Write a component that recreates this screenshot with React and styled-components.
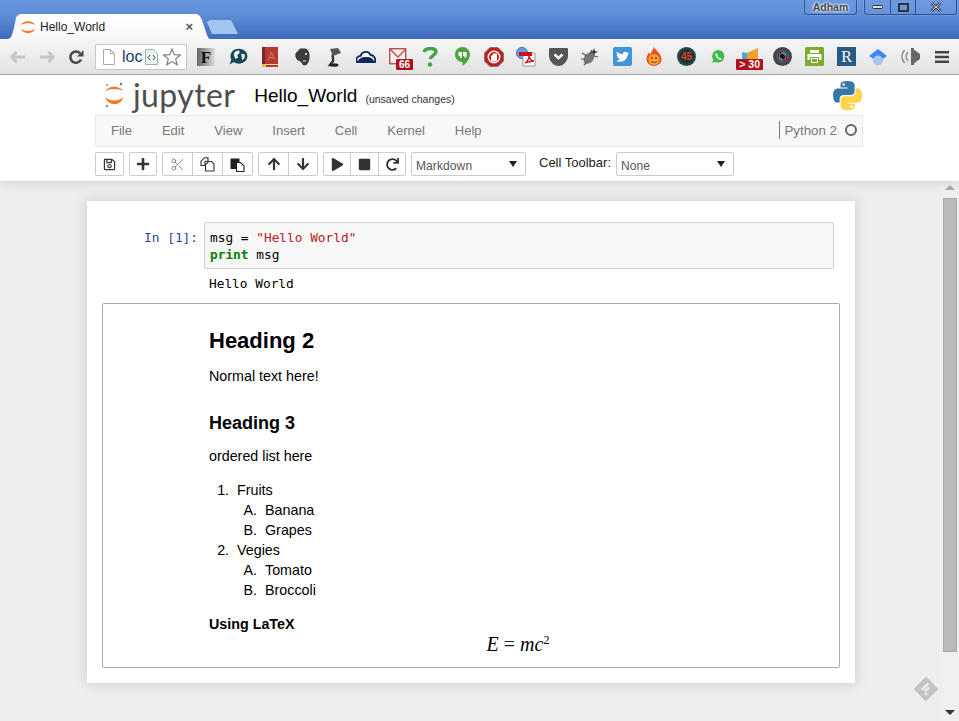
import React from 'react';
import styled, { createGlobalStyle } from 'styled-components';
import { FaRegSave, FaPlus, FaArrowUp, FaArrowDown, FaPlay, FaStop, FaRedo } from 'react-icons/fa';
import { Scissors } from 'lucide-react';

const Global = createGlobalStyle`
  html, body { margin: 0; padding: 0; height: 100%; overflow: hidden; background: #eee; }
  * { box-sizing: border-box; }
  body { font-family: "Liberation Sans", Arial, sans-serif; }
`;
const Page = styled.div`display: flex; flex-direction: column; width: 959px; height: 721px; overflow: hidden;`;

const TitleBar = styled.div`
  height: 39px; flex: none; display: flex; align-items: flex-end; padding-left: 7px;
  background: linear-gradient(#6796de 0%, #5f8ed9 35%, #3f6cbb 100%); position: relative;
`;
const Tab = styled.div`
  width: 204px; height: 25px; background: linear-gradient(#fff, #f7f7f7); display: flex; align-items: center;
  padding: 0 18px 0 14px; gap: 5px;
  clip-path: path('M0 25 C5 25 5 20 7 14 L9 4 C10 1 12 0 15 0 L188 0 C192 0 193 2 195 6 L199 18 C201 23 201 25 204 25 Z');
`;
const TabTitle = styled.span`flex: 1; font-size: 12px; color: #222;`;
const TabClose = styled.span`font-size: 13px; font-weight: bold; color: #555; line-height: 1;`;
const NewTab = styled.div`
  width: 31px; height: 14px; margin: 0 0 5px -4px; background: #a5c5f1;
  clip-path: polygon(3px 0, 24px 0, 31px 14px, 5px 14px, 0 2px);
`;
const WinControls = styled.div`position: absolute; top: 0; right: 2px; display: flex; gap: 7px;`;
const WinGroup = styled.div`
  display: flex; height: 15px; border: 1px solid #2f5290; border-top: none; border-radius: 0 0 4px 4px;
  box-shadow: 0 0 0 1px rgba(255,255,255,.1); background: rgba(255,255,255,.04);
`;
const WinUser = styled.span`
  width: 51px; text-align: center; font-size: 10.5px; font-weight: bold; line-height: 14px; color: #4a4a4a;
  text-shadow: 0 0 3px #fff, 0 0 3px #fff;
`;
const WinBtn = styled.span`
  width: ${p => p.$w}px; display: flex; align-items: center; justify-content: center;
  & + & { border-left: 1px solid #2f5290; }
`;

const ChromeBar = styled.div`
  height: 36px; flex: none; display: flex; align-items: center; padding-left: 3px;
  background: linear-gradient(#f6f6f6, #e2e2e2); border-bottom: 1px solid #a3a3a3;
`;
const NavSlot = styled.span`width: 29px; height: 20px; display: flex; align-items: center; justify-content: center; flex: none;`;
const Omnibox = styled.div`
  width: 92px; height: 26px; margin: 0 3px 0 5px; display: flex; align-items: center; padding: 0 3px 0 7px; flex: none;
  background: #fff; border: 1px solid #c7c7c7; border-radius: 2px; box-shadow: 0 0 1px #ddd;
`;
const OmniText = styled.span`font-size: 16px; color: #1c3a5c; margin-left: 7px; width: 23px; overflow: hidden; white-space: nowrap; flex: none;`;
const ExtRow = styled.div`display: flex; align-items: center;`;
const ExtSlot = styled.span`width: 32px; height: 24px; flex: none; display: flex; align-items: center; justify-content: center; position: relative;`;
const Badge = styled.span`
  position: absolute; bottom: -1px; right: ${p => p.$r}px; height: 11px; padding: 0 3px; background: #b0121d; color: #fff;
  font: bold ${p => p.$s}px/11px "Liberation Sans", sans-serif; border-radius: 1px; white-space: nowrap;
`;

const NbHeader = styled.div`
  height: 40px; flex: none; background: #fff; display: flex; align-items: center; padding: 0 97px 0 104px;
`;
const Wordmark = styled.span`font: 400 32px/1 Lato, sans-serif; color: #4e4e4e; margin-left: 8px; letter-spacing: .4px;`;
const NbTitle = styled.span`font-size: 19px; color: #000; margin-left: 19px; margin-top: 2px;`;
const Saved = styled.span`font-size: 10.5px; color: #333; margin-left: 8px; margin-top: 7px; flex: 1;`;

const MenuWrap = styled.div`height: 32px; flex: none; background: #fff; padding: 0 96px 0 95px;`;
const MenuBar = styled.div`
  height: 32px; padding-bottom: 2px; background: #f8f8f8; border: 1px solid #e7e7e7; border-radius: 0 0 2px 2px; display: flex; align-items: center;
`;
const MenuItem = styled.span`font-size: 13px; color: #777; padding: 0 15px;`;
const Kernel = styled.div`
  margin-left: auto; display: flex; align-items: center; height: 18px; border-left: 1px solid #777; padding: 0 5px 0 5px;
  font-size: 13.3px; color: #777; gap: 8px;
`;
const KernelDot = styled.span`width: 12px; height: 12px; border-radius: 50%; border: 2px solid #666;`;

const ToolRow = styled.div`
  height: 34px; flex: none; background: #fff; display: flex; align-items: center; padding: 0 0 0 95px;
  box-shadow: 0 0 12px 1px rgba(87,87,87,.2); position: relative; z-index: 2; clip-path: inset(0 -20px -20px -20px);
`;
const BtnGroup = styled.div`
  display: flex; height: 24px; margin-right: 5px; border: 1px solid #ccc; border-radius: 2px; background: #fff;
`;
const Btn = styled.span`
  width: ${p => p.$w}px; display: flex; align-items: center; justify-content: center; color: ${p => p.$c || '#333'};
  font-size: ${p => p.$s || 13}px; & + & { border-left: 1px solid #ccc; }
`;
const Select = styled.div`
  width: ${p => p.$w}px; height: 24px; border: 1px solid #ccc; border-radius: 2px; background: #fff; display: flex; align-items: center;
  justify-content: space-between; padding: 3px 8px 0 4px; font-size: 12px; color: #555; letter-spacing: .1px; flex: none;
  &::after { content: ''; border: 4px solid transparent; border-top: 6px solid #222; border-bottom: 0; margin-top: -4px; }
`;
const ToolLabel = styled.span`font-size: 13px; color: #222; margin: -3px 5px 0 13px; width: 72px; white-space: nowrap;`;

const Main = styled.div`flex: 1; display: flex; background: #eee; position: relative; min-height: 0;`;
const Site = styled.div`flex: 1; padding: 20px 0 0 87px;`;
const Notebook = styled.div`
  width: 768px; height: 482px; background: #fff; box-shadow: 0 0 12px 1px rgba(87,87,87,.2); padding: 21px 15px 0 15px;
`;
const InputRow = styled.div`display: flex; padding-right: 6px;`;
const Prompt = styled.div`
  width: 102px; flex: none; text-align: right; padding: 7px 6px 0 0; font: 12.8px/17px "DejaVu Sans Mono", monospace; color: #303f9f; white-space: nowrap;
`;
const InputArea = styled.pre`
  flex: 1; margin: 0; height: 47px; background: #f7f7f7; border: 1px solid #cfcfcf; border-radius: 2px; padding: 6px 5px 0;
  font: 12.8px/17px "DejaVu Sans Mono", monospace; color: #000;
`;
const Str = styled.span`color: #ba2121;`;
const Kw = styled.span`color: #008000; font-weight: bold;`;
const Output = styled.pre`
  margin: 0; height: 34px; padding: 6px 0 0 107px; font: 12.8px/17px "DejaVu Sans Mono", monospace; color: #000;
`;
const TextCell = styled.div`
  height: 365px; border: 1px solid #ababab; border-radius: 2px; padding: 0 0 0 106px; font-size: 14.3px; color: #000; line-height: 20px;
`;
const H2 = styled.h2`margin: 0; padding-top: 23px; font-size: 22px; line-height: 28px; font-weight: bold; height: 50px;`;
const Para = styled.p`margin: ${p => p.$m}; height: 20px;`;
const H3 = styled.h3`margin: 0; padding-top: 26px; font-size: 18px; line-height: 22px; font-weight: bold; height: 49px;`;
const OL = styled.ol`
  margin: 14px 0 14px; padding: 0 0 0 28px;
  & > li::marker { content: counter(list-item) ".\u00a0 "; }
  & & { margin: 0; padding-left: 28px; }
  & & > li::marker { content: counter(list-item, upper-alpha) ".\u00a0 "; }
`;
const LatexTitle = styled.div`font-weight: bold; font-size: 14.3px; height: 20px;`;
const Equation = styled.div`
  width: 618px; text-align: center; font: italic 20px/20px "Liberation Serif", serif; color: #000;
`;
const EqUp = styled.sup`font-size: 12px; font-style: normal; line-height: 0; vertical-align: 7px;`;
const EqRoman = styled.span`font-style: normal; margin: 0 5px; color: #222;`;

const Scrollbar = styled.div`
  width: 18px; flex: none; background: #efefef; display: flex; flex-direction: column; align-items: center; padding: 4px 0 6px; z-index: 1;
`;
const Arrow = styled.span`
  width: 0; height: 0; border: 5px solid transparent;
  ${p => p.$up ? 'border-bottom: 5px solid #aaa; border-top: 0;' : 'border-top: 5px solid #333; border-bottom: 0; margin-top: auto;'}
`;
const Thumb = styled.div`width: 14px; height: 454px; margin-top: 8px; background: #b9b9b9; border: 1px solid #aaa;`;
const Feedly = styled.svg`position: absolute; left: 913px; top: 495px;`;

const S = ({ w = 20, h = 20, vb = '0 0 24 24', children }) => (
  <svg width={w} height={h} viewBox={vb}>{children}</svg>
);

const JupLogo = () => (
  <svg width="21" height="26" viewBox="0 0 21 26" style={{ flex: 'none' }}>
    <path d="M1 9.5C4 3 16 3 19.5 9.5C15 6.3 5.5 6.3 1 9.5Z" fill="#f37726" />
    <path d="M1 15C5 19.5 15.5 19.5 19.5 15C17 24.5 4 24.5 1 15Z" fill="#f37726" />
    <circle cx="17" cy="2" r="1.2" fill="#767677" /><circle cx="3" cy="3" r="1" fill="#989798" /><circle cx="3" cy="24" r="1.3" fill="#989798" />
  </svg>
);
const TabLogo = () => (
  <svg width="14" height="14" viewBox="0 0 14 14" style={{ flex: 'none' }}>
    <path d="M0 5C2 0 12 0 14 5C10 2.5 4 2.5 0 5Z" fill="#f37726" />
    <path d="M0 9C4 11.5 10 11.5 14 9C12 14.5 2 14.5 0 9Z" fill="#f37726" />
  </svg>
);
const PyLogo = () => (
  <svg width="29" height="29" viewBox="0 0 110 110" style={{ flex: 'none' }}>
    <path fill="#3b76a8" fillRule="evenodd" d="M54.9 0C27 0 28.7 12.1 28.7 12.1L28.8 24.6H55.3V28.4H18.2C18.2 28.4 .3 26.4 .3 54.6C.3 82.8 15.9 81.8 15.9 81.8H25.2V68.7C25.2 68.7 24.7 53 40.5 53H66.9C66.9 53 81.8 53.2 81.8 38.6V14.4C81.8 14.4 84 0 54.9 0ZM40.2 8.4a4.8 4.8 0 1 1 0 9.6a4.8 4.8 0 1 1 0-9.6Z" />
    <path transform="rotate(180 55.3 55.3)" fill="#fdd54a" fillRule="evenodd" d="M54.9 0C27 0 28.7 12.1 28.7 12.1L28.8 24.6H55.3V28.4H18.2C18.2 28.4 .3 26.4 .3 54.6C.3 82.8 15.9 81.8 15.9 81.8H25.2V68.7C25.2 68.7 24.7 53 40.5 53H66.9C66.9 53 81.8 53.2 81.8 38.6V14.4C81.8 14.4 84 0 54.9 0ZM40.2 8.4a4.8 4.8 0 1 1 0 9.6a4.8 4.8 0 1 1 0-9.6Z" />
  </svg>
);
const NavArrow = ({ flip }) => (
  <svg width="16" height="14" viewBox="0 0 17 14" style={flip ? { transform: 'scaleX(-1)' } : undefined}>
    <path d="M7 1.5L1.8 7L7 12.5M2 7H16" fill="none" stroke="#c6c6c6" strokeWidth="3" />
  </svg>
);
const Reload = () => (
  <svg width="16" height="16" viewBox="0 0 16 16">
    <path d="M13 10.5A5.6 5.6 0 1 1 12 4.3" fill="none" stroke="#4a4a4a" strokeWidth="2.6" />
    <path d="M15.5 1V7.5H9Z" fill="#4a4a4a" />
  </svg>
);
const PageIcon = () => (
  <svg width="12" height="16" viewBox="0 0 12 16" style={{ flex: 'none' }}>
    <path d="M.5.5H7.5L11.5 4.5V15.5H.5Z" fill="#fff" stroke="#aaa" /><path d="M7.5.5V4.5H11.5" fill="none" stroke="#aaa" />
  </svg>
);
const CodePage = () => (
  <svg width="13" height="16" viewBox="0 0 13 16" style={{ flex: 'none' }}>
    <path d="M.5.5H8.5L12.5 4.5V15.5H.5Z" fill="#eef4f2" stroke="#9ab5ad" />
    <path d="M5 6L3 8.5L5 11M8 6L10 8.5L8 11" fill="none" stroke="#444" />
  </svg>
);
const Star = () => (
  <svg width="18" height="18" viewBox="0 0 18 18" style={{ flex: 'none', marginLeft: 5 }}>
    <path d="M9 1L11.3 6.6L17.3 7L12.7 10.9L14.1 16.8L9 13.6L3.9 16.8L5.3 10.9L.7 7L6.7 6.6Z" fill="#fff" stroke="#777" strokeWidth="1.1" />
  </svg>
);
const CopyIcon = () => (
  <svg width="15" height="15" viewBox="0 0 15 15">
    <path d="M4.5 .8H8V4L5 4.5V8.5H1V4.2Z" fill="#fff" stroke="#333" strokeWidth="1.1" />
    <path d="M8.5 4.5H11.5L14 7V14H5.5V7.5Z" fill="#fff" stroke="#333" strokeWidth="1.1" />
  </svg>
);
const PasteIcon = () => (
  <svg width="15" height="15" viewBox="0 0 15 15">
    <path d="M.5 1.5H9.5V5H6V12H.5Z" fill="#222" />
    <path d="M6.5 5.5H10.5L14 9V14.5H6.5Z" fill="#fff" stroke="#222" strokeWidth="1.1" />
  </svg>
);

const icons = [
  <S w={18} h={18} vb="0 0 18 18" key="f"><defs><linearGradient id="fg" x1="0" x2="1"><stop offset="0" stopColor="#666" /><stop offset="1" stopColor="#ddd" /></linearGradient></defs><rect width="18" height="18" fill="url(#fg)" /><text x="9" y="15" textAnchor="middle" fontFamily="Liberation Serif" fontWeight="bold" fontSize="17" fill="#111">F</text></S>,
  <S key="g"><path d="M13 2a10 9 0 1 1-6 16l-5 3 2-6A10 9 0 0 1 13 2Z" fill="#17495c" /><path d="M8 6l5-2 1 3-3 3 1 3-3 1-2-4ZM16 8l4 1 0 4-3 3Z" fill="#fff" /></S>,
  <S key="b" w={16} h={20} vb="0 0 16 20"><rect width="16" height="20" fill="#b23a31" /><rect width="3" height="18" fill="#6f2b24" /><text x="9.5" y="13" textAnchor="middle" fontFamily="Liberation Sans" fontSize="11" fill="#d9675c">A</text><rect x="3" y="17" width="13" height="1" fill="#f4d9a0" /><rect y="17" width="4" height="3" fill="#e7c13b" /></S>,
  <S key="e" w={15} h={18} vb="0 0 15 18"><path d="M3 3L5 0.6H10C13 1 14.6 4 14.6 8C14.6 11 14 14 12 16.5C10 18 7.5 17.5 7 15.5C6 13 3 13 1.5 11C0 9 0 6 1 4.5Z" fill="#3c3c3c" /><circle cx="11" cy="6" r="1" fill="#fff" /><path d="M8 12H11V14H8Z" fill="#999" /></S>,
  <S key="l" w={16} h={20} vb="0 0 16 20"><path d="M8 6C5 8 8 12 7 14L4 18H12" fill="none" stroke="#333" strokeWidth="2.4" /><path d="M4 2L12 1L15 6L7 9Z" fill="#555" /><ellipse cx="8" cy="18" rx="4.5" ry="1.5" fill="#222" /></S>,
  <S key="c" w={20} h={13} vb="0 0 20 13"><path d="M1 12C-.5 8 2 6 4.5 6C6 1.5 12.5 0 14.5 5C17.5 5 20 8 19 12Z" fill="#fff" stroke="#10285c" strokeWidth="1.8" /><path d="M2 12C2 9 5 7 10 7C15 7 18 9 18 12Z" fill="#10285c" /></S>,
  <><S key="m" w={18} h={17} vb="0 0 18 17"><rect x=".7" y=".7" width="16" height="15" fill="#f7eeee" stroke="#b85050" strokeWidth="1.4" /><path d="M1 1L9 9L17 1" fill="none" stroke="#b85050" strokeWidth="1.4" /></S><Badge $r={1} $s={10}>66</Badge></>,
  <S key="q" w={16} h={20} vb="0 0 16 20"><path d="M2 5C3 1 13 0 14 4.5C14.5 8 9 8 8.3 12" fill="none" stroke="#46a348" strokeWidth="3.4" /><circle cx="8" cy="17.5" r="2.2" fill="#46a348" /></S>,
  <S key="h" w={15} h={19} vb="0 0 15 19"><path d="M7.5 0C3.4 0 0 3.3 0 7.5C0 11.6 3.4 15 7.5 15V19C11 16.5 15 12 15 7.5C15 3.3 11.6 0 7.5 0Z" fill="#4fa33f" /><path d="M3.5 5H7V9C7 10 6 11 5 11V9H3.5ZM8 5H11.5V9C11.5 10 10.5 11 9.5 11V9H8Z" fill="#fff" /></S>,
  <S key="s" vb="0 0 20 20"><path d="M6 .5H14L19.5 6V14L14 19.5H6L.5 14V6Z" fill="#c21d1d" stroke="#777" /><circle cx="10" cy="10" r="6.5" fill="#fff" /><circle cx="10" cy="10" r="5" fill="#c21d1d" /><path d="M7 8.5V13C7 15 13 15 13 13V6.5H8.8V8.5Z" fill="#fff" /></S>,
  <S key="p" w={20} h={20} vb="0 0 20 20"><circle cx="6" cy="6" r="5.5" fill="#6f9fd8" stroke="#3b6fb0" /><path d="M7 6H19V19H7Z" fill="#fff" stroke="#999" /><rect x="3" y="5" width="13" height="4" fill="#c8101e" /><path d="M9 16C12 14 13 11 13 9C14 13 16 14 18 14C15 14 12 15 9 16Z" fill="none" stroke="#c8101e" strokeWidth="1.3" /></S>,
  <S key="k" w={19} h={18} vb="0 0 19 18"><path d="M1 0H18Q19 0 19 1V8C19 13 14 18 9.5 18C5 18 0 13 0 8V1Q0 0 1 0Z" fill="#555" /><path d="M5.5 6.5L9.5 10L13.5 6.5" fill="none" stroke="#fff" strokeWidth="2.6" /></S>,
  <S key="u" vb="0 0 20 20"><ellipse cx="9" cy="11" rx="4.5" ry="6.5" transform="rotate(40 9 11)" fill="#777" /><path d="M2 6L7 9M1 12H5M4 18L7 15M12 3L10 7M18 10L14 9" stroke="#555" strokeWidth="1.2" /><path d="M14 1L15 4L18 5L15 6L14 9L13 6L10 5L13 4Z" fill="#333" /></S>,
  <S key="t" w={19} h={19} vb="0 0 19 19"><rect width="19" height="19" rx="2" fill="#3f95d6" /><path d="M3 14C6 15.5 12 15.5 14 10C15 8 15 7 16 6L14.5 6.3L15.6 5L13.8 5.4C12 4 9.5 5 9.8 7.3C7.5 7.3 5.5 6.2 4 4.5C3.4 6 3.7 7 4.7 8L3.6 7.8C3.7 9 4.5 10 5.6 10.3L4.5 10.4C5 11.3 6 11.8 7 12C5.8 13 4.5 13.8 3 14Z" fill="#fff" /></S>,
  <S key="fi" w={16} h={19} vb="0 0 16 19"><path d="M8 0C9 3 15 6 15.5 12C15.5 16 12 19 8 19C4 19 .5 16 .5 12C.5 9 2 7 3 5.5L4.5 7.5C5 5 7 3 8 0Z" fill="#e8521c" /><circle cx="8" cy="12.5" r="5.5" fill="#f7a23a" /><path d="M5 14C6.5 16 9.5 16 11 14" fill="none" stroke="#7a2c08" /><circle cx="6" cy="11" r=".9" fill="#7a2c08" /><circle cx="10" cy="11" r=".9" fill="#7a2c08" /></S>,
  <S key="n" w={19} h={19} vb="0 0 19 19"><circle cx="9.5" cy="9.5" r="9.5" fill="#174a4e" /><circle cx="9.5" cy="9.5" r="7" fill="#2b2b2b" /><text x="9.5" y="13" textAnchor="middle" fontFamily="Liberation Sans" fontSize="10" fontWeight="bold" fill="#d3452b">45</text></S>,
  <S key="w" w={15} h={15} vb="0 0 15 15"><path d="M7.5 .5A6.8 6.8 0 0 0 1.6 10.8L.6 14.4L4.3 13.5A6.8 6.8 0 1 0 7.5 .5Z" fill="#3fbc45" stroke="#eee" /><path d="M5 4C4 5 4.3 7 6 9C8 11 10 11.5 11 10.3L9.6 8.8L8.6 9.4L6.2 7L6.8 5.8Z" fill="#fff" /></S>,
  <><S key="x" w={18} h={18} vb="0 0 18 18"><path d="M1 4L6 5V16H1Z" fill="#49a7e0" /><path d="M6 5L17 0V16H6Z" fill="#f5a12b" /></S><Badge $r={3} $s={10.5}>&gt; 30</Badge></>,
  <S key="o" w={19} h={19} vb="0 0 19 19"><circle cx="9.5" cy="9.5" r="9.5" fill="#444" /><circle cx="9.5" cy="9.5" r="5.5" fill="#111" stroke="#777" /><circle cx="9.5" cy="9.5" r="3.4" fill="none" stroke="#e02f8a" strokeWidth="1.5" strokeDasharray="5 5" /><circle cx="9.5" cy="9.5" r="3.4" fill="none" stroke="#2fc4c4" strokeWidth="1.5" strokeDasharray="5 5" strokeDashoffset="5" /></S>,
  <S key="pr" w={19} h={19} vb="0 0 19 19"><rect width="19" height="19" rx="1.5" fill="#7cab2e" /><path d="M5 3H14V6H5ZM2.5 7H16.5V13H14V10H5V13H2.5Z" fill="#fff" /><path d="M6 11H13V16H6Z" fill="#fff" /><path d="M7 12H12V15H7Z" fill="#7cab2e" /></S>,
  <S key="r" w={19} h={19} vb="0 0 19 19"><rect width="19" height="19" fill="#275a85" /><text x="9.5" y="15" textAnchor="middle" fontFamily="Liberation Serif" fontSize="16" fill="#fff">R</text></S>,
  <S key="ha" w={18} h={18} vb="0 0 18 18"><path d="M0 8L9 1L18 8L9 14Z" fill="#4285f4" /><circle cx="9" cy="12.5" r="5" fill="#a9c5f5" /></S>,
  <S key="sp" w={19} h={17} vb="0 0 19 17"><path d="M10 0L13 0V17H10Z" fill="#666" /><path d="M12 1L19 6V11L12 16Z" fill="#666" /><path d="M7 4C4.5 7 4.5 10 7 13M3.5 2C0 7 0 10 3.5 15" fill="none" stroke="#888" strokeWidth="1.4" /></S>,
  <S key="me" w={14} h={14} vb="0 0 14 14"><path d="M0 1H14V3.6H0ZM0 5.7H14V8.3H0ZM0 10.4H14V13H0Z" fill="#444" /></S>,
];

const MENU = ['File', 'Edit', 'View', 'Insert', 'Cell', 'Kernel', 'Help'];

export default function App() {
  return (
    <Page>
      <Global />
      <TitleBar>
        <Tab><TabLogo /><TabTitle>Hello_World</TabTitle><TabClose>×</TabClose></Tab>
        <NewTab />
        <WinControls>
          <WinGroup><WinUser>Adham</WinUser></WinGroup>
          <WinGroup>
            <WinBtn $w={25}><svg width="11" height="4"><rect x=".5" y=".5" width="10" height="3" rx="1" fill="#ddd" stroke="#333" /></svg></WinBtn>
            <WinBtn $w={25}><svg width="11" height="9"><rect x="1" y="1" width="9" height="7" fill="none" stroke="#333" strokeWidth="2" /></svg></WinBtn>
            <WinBtn $w={41}><svg width="12" height="10"><path d="M1.5 1L10.5 9M10.5 1L1.5 9" stroke="#333" strokeWidth="2.6" /><path d="M1.5 1L10.5 9M10.5 1L1.5 9" stroke="#e8e8e8" strokeWidth="1" /></svg></WinBtn>
          </WinGroup>
        </WinControls>
      </TitleBar>
      <ChromeBar>
        <NavSlot><NavArrow /></NavSlot>
        <NavSlot><NavArrow flip /></NavSlot>
        <NavSlot><Reload /></NavSlot>
        <Omnibox><PageIcon /><OmniText>loc</OmniText><CodePage /><Star /></Omnibox>
        <ExtRow>{icons.map((ic, i) => <ExtSlot key={i}>{ic}</ExtSlot>)}</ExtRow>
      </ChromeBar>
      <NbHeader>
        <JupLogo /><Wordmark>jupyter</Wordmark>
        <NbTitle>Hello_World</NbTitle><Saved>(unsaved changes)</Saved>
        <PyLogo />
      </NbHeader>
      <MenuWrap>
        <MenuBar>
          {MENU.map(m => <MenuItem key={m}>{m}</MenuItem>)}
          <Kernel>Python 2<KernelDot /></Kernel>
        </MenuBar>
      </MenuWrap>
      <ToolRow>
        <BtnGroup><Btn $w={27}><FaRegSave /></Btn></BtnGroup>
        <BtnGroup><Btn $w={26} $s={14}><FaPlus /></Btn></BtnGroup>
        <BtnGroup>
          <Btn $w={29} $c="#777"><Scissors size={15} strokeWidth={1.3} /></Btn><Btn $w={30}><CopyIcon /></Btn><Btn $w={30}><PasteIcon /></Btn>
        </BtnGroup>
        <BtnGroup><Btn $w={29} $s={14}><FaArrowUp /></Btn><Btn $w={29} $s={14}><FaArrowDown /></Btn></BtnGroup>
        <BtnGroup><Btn $w={26}><FaPlay /></Btn><Btn $w={28}><FaStop /></Btn><Btn $w={27}><FaRedo /></Btn></BtnGroup>
        <Select $w={115}>Markdown</Select>
        <ToolLabel>Cell Toolbar:</ToolLabel>
        <Select $w={118}>None</Select>
      </ToolRow>
      <Main>
        <Site>
          <Notebook>
            <InputRow>
              <Prompt>In [1]:</Prompt>
              <InputArea>msg = <Str>"Hello World"</Str>{'\n'}<Kw>print</Kw> msg</InputArea>
            </InputRow>
            <Output>Hello World</Output>
            <TextCell>
              <H2>Heading 2</H2>
              <Para $m="12px 0 0">Normal text here!</Para>
              <H3>Heading 3</H3>
              <Para $m="11px 0 0">ordered list here</Para>
              <OL>
                <li>Fruits
                  <OL><li>Banana</li><li>Grapes</li></OL>
                </li>
                <li>Vegies
                  <OL><li>Tomato</li><li>Broccoli</li></OL>
                </li>
              </OL>
              <LatexTitle>Using LaTeX</LatexTitle>
              <Equation>E<EqRoman>=</EqRoman>mc<EqUp>2</EqUp></Equation>
            </TextCell>
          </Notebook>
        </Site>
        <Scrollbar><Arrow $up /><Thumb /><Arrow /></Scrollbar>
        <Feedly width="26" height="26" viewBox="0 0 26 26">
          <path d="M13 2L24 13L13 24L2 13Z" fill="#c4c4c4" stroke="#c4c4c4" strokeWidth="2" strokeLinejoin="round" />
          <path d="M14.5 6.5L8 13L9.7 14.7L16.2 8.2ZM15 10.5L11 14.5L12.7 16.2L16.7 12.2ZM13 16.5a1.5 1.5 0 1 0 .01 0Z" fill="#eee" />
        </Feedly>
      </Main>
    </Page>
  );
}
